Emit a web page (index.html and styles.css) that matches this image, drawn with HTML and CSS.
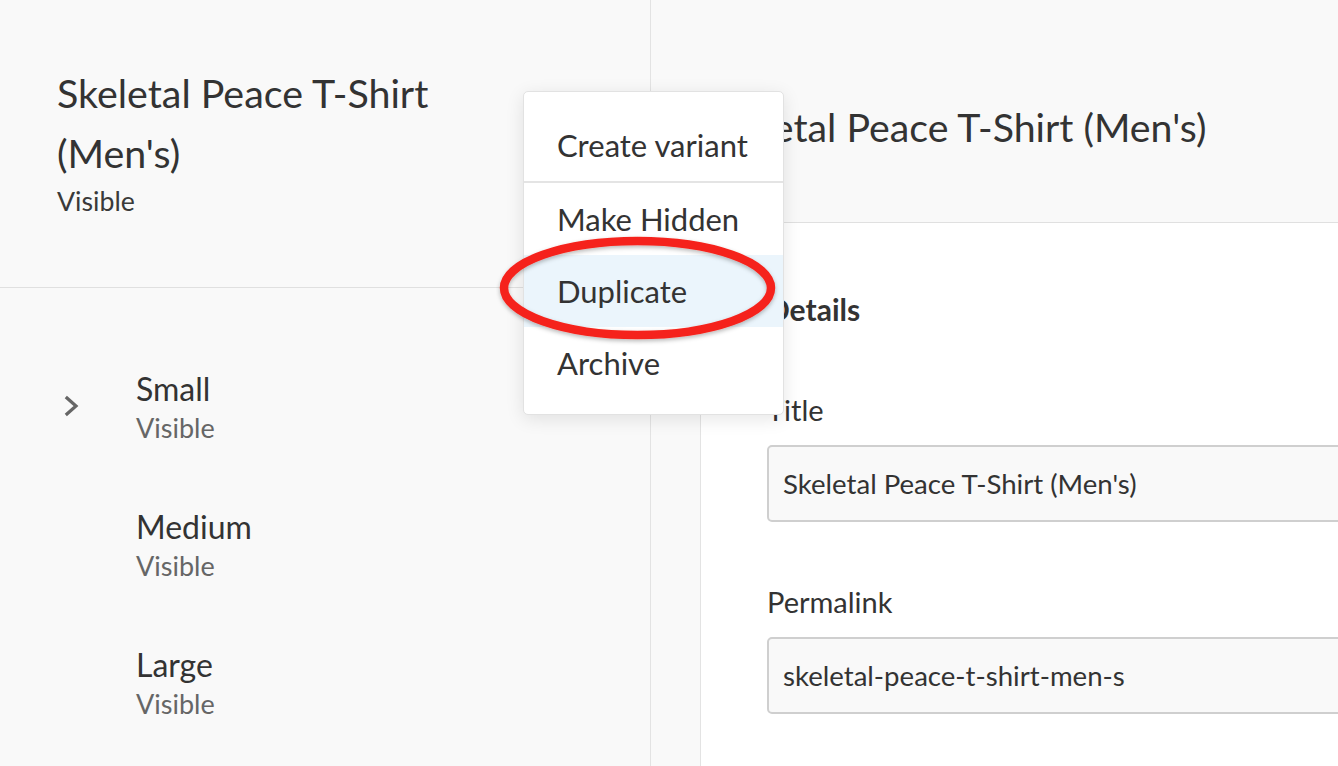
FILE: index.html
```html
<!DOCTYPE html>
<html>
<head>
<meta charset="utf-8">
<link rel="stylesheet" href="styles.css">
</head>
<body>
<div class="app">
  <aside class="sidebar">
    <header class="sidebar-header">
      <h1 class="product-title">Skeletal Peace T-Shirt (Men's)</h1>
      <div class="product-status">Visible</div>
    </header>
    <ul class="variants">
      <li class="variant">
        <span class="chevron"><svg width="16" height="22" viewBox="0 0 16 22"><path d="M3 3 L12 11 L3 19" fill="none" stroke="#666" stroke-width="3.2" stroke-linecap="square"/></svg></span>
        <div class="variant-text"><div class="variant-name">Small</div><div class="variant-status">Visible</div></div>
      </li>
      <li class="variant">
        <span class="chevron"></span>
        <div class="variant-text"><div class="variant-name">Medium</div><div class="variant-status">Visible</div></div>
      </li>
      <li class="variant">
        <span class="chevron"></span>
        <div class="variant-text"><div class="variant-name">Large</div><div class="variant-status">Visible</div></div>
      </li>
    </ul>
  </aside>
  <main class="main">
    <header class="main-header">
      <h2 class="main-title">Skeletal Peace T-Shirt (Men's)</h2>
    </header>
    <div class="main-body">
      <section class="card">
        <h3 class="card-title">Details</h3>
        <label class="field-label">Title</label>
        <div class="field-input">Skeletal Peace T-Shirt (Men's)</div>
        <label class="field-label second">Permalink</label>
        <div class="field-input">skeletal-peace-t-shirt-men-s</div>
      </section>
    </div>
  </main>
</div>
<div class="menu">
  <div class="menu-item">Create variant</div>
  <div class="menu-sep"></div>
  <div class="menu-item">Make Hidden</div>
  <div class="menu-item active">Duplicate</div>
  <div class="menu-item">Archive</div>
</div>
<svg class="ring" width="290" height="120" viewBox="0 0 290 120">
  <defs>
    <filter id="sh" x="-10%" y="-20%" width="120%" height="140%">
      <feDropShadow dx="0" dy="2" stdDeviation="2" flood-color="#000" flood-opacity="0.28"/>
    </filter>
  </defs>
  <ellipse cx="141.5" cy="58" rx="133.5" ry="47" fill="none" stroke="#f5231b" stroke-width="8.5" filter="url(#sh)"/>
</svg>
</body>
</html>
```
FILE: styles.css
```css
* { box-sizing: border-box; }
html, body { margin: 0; padding: 0; }
body {
  width: 1338px;
  height: 766px;
  overflow: hidden;
  font-family: "Lato", "Liberation Sans", sans-serif;
  color: #333;
  background: #f9f9f9;
  position: relative;
}
.app { display: flex; height: 766px; }
.sidebar {
  width: 651px;
  flex: none;
  border-right: 1px solid #e3e3e3;
  background: #f9f9f9;
}
.sidebar-header {
  height: 288px;
  border-bottom: 1px solid #e0e0e0;
  padding: 63px 150px 0 57px;
}
.product-title {
  margin: 0;
  font-weight: 400;
  font-size: 39.4px;
  line-height: 60px;
  color: #333;
}
.product-status {
  font-size: 26.7px;
  line-height: 36px;
  color: #3a3a3a;
}
.variants { list-style: none; margin: 0; padding: 52px 0 0 0; }
.variant {
  display: flex;
  align-items: center;
  height: 138px;
  padding: 0 0 0 64px;
}
.chevron { width: 16px; height: 22px; margin-right: 56px; display: flex; margin-top: -6px; }
.variant-name { font-size: 32px; line-height: 38px; color: #333; }
.variant-status { font-size: 27px; line-height: 40px; color: #666; }
.main { flex: 1; display: flex; flex-direction: column; min-width: 0; }
.main-header {
  height: 223px;
  flex: none;
  border-bottom: 1px solid #e0e0e0;
  padding: 97px 0 0 52px;
}
.main-title {
  margin: 0;
  font-weight: 400;
  font-size: 39.3px;
  line-height: 60px;
  color: #333;
}
.main-body { flex: 1; padding-left: 49px; }
.card {
  height: 100%;
  background: #fff;
  border-left: 1px solid #e3e3e3;
  padding: 66px 0 0 66px;
}
.card-title {
  margin: 0;
  font-weight: 700;
  font-size: 30px;
  line-height: 40px;
  color: #333;
}
.field-label {
  display: block;
  margin-top: 63px;
  font-size: 29px;
  line-height: 36px;
  color: #333;
}
.field-label.second { margin-top: 62px; }
.field-input {
  margin-top: 17px;
  width: 620px;
  height: 77px;
  border: 2px solid #cfcfcf;
  border-radius: 5px;
  background: #f9f9f9;
  padding: 0 14px;
  display: flex;
  align-items: center;
  font-size: 27.6px;
  color: #333;
}
.menu {
  position: absolute;
  left: 523px;
  top: 91px;
  width: 261px;
  height: 324px;
  background: #fff;
  border: 1px solid #e2e2e2;
  border-radius: 5px;
  box-shadow: 0 4px 18px rgba(0,0,0,0.10);
  padding: 17px 0 0 0;
}
.menu-item {
  height: 72px;
  display: flex;
  align-items: center;
  padding-left: 33px;
  font-size: 31px;
  color: #333;
}
.menu-item.active { background: #ebf5fc; }
.menu-sep { height: 2px; background: #e4e4e4; }
.ring {
  position: absolute;
  left: 496px;
  top: 230px;
}
```
